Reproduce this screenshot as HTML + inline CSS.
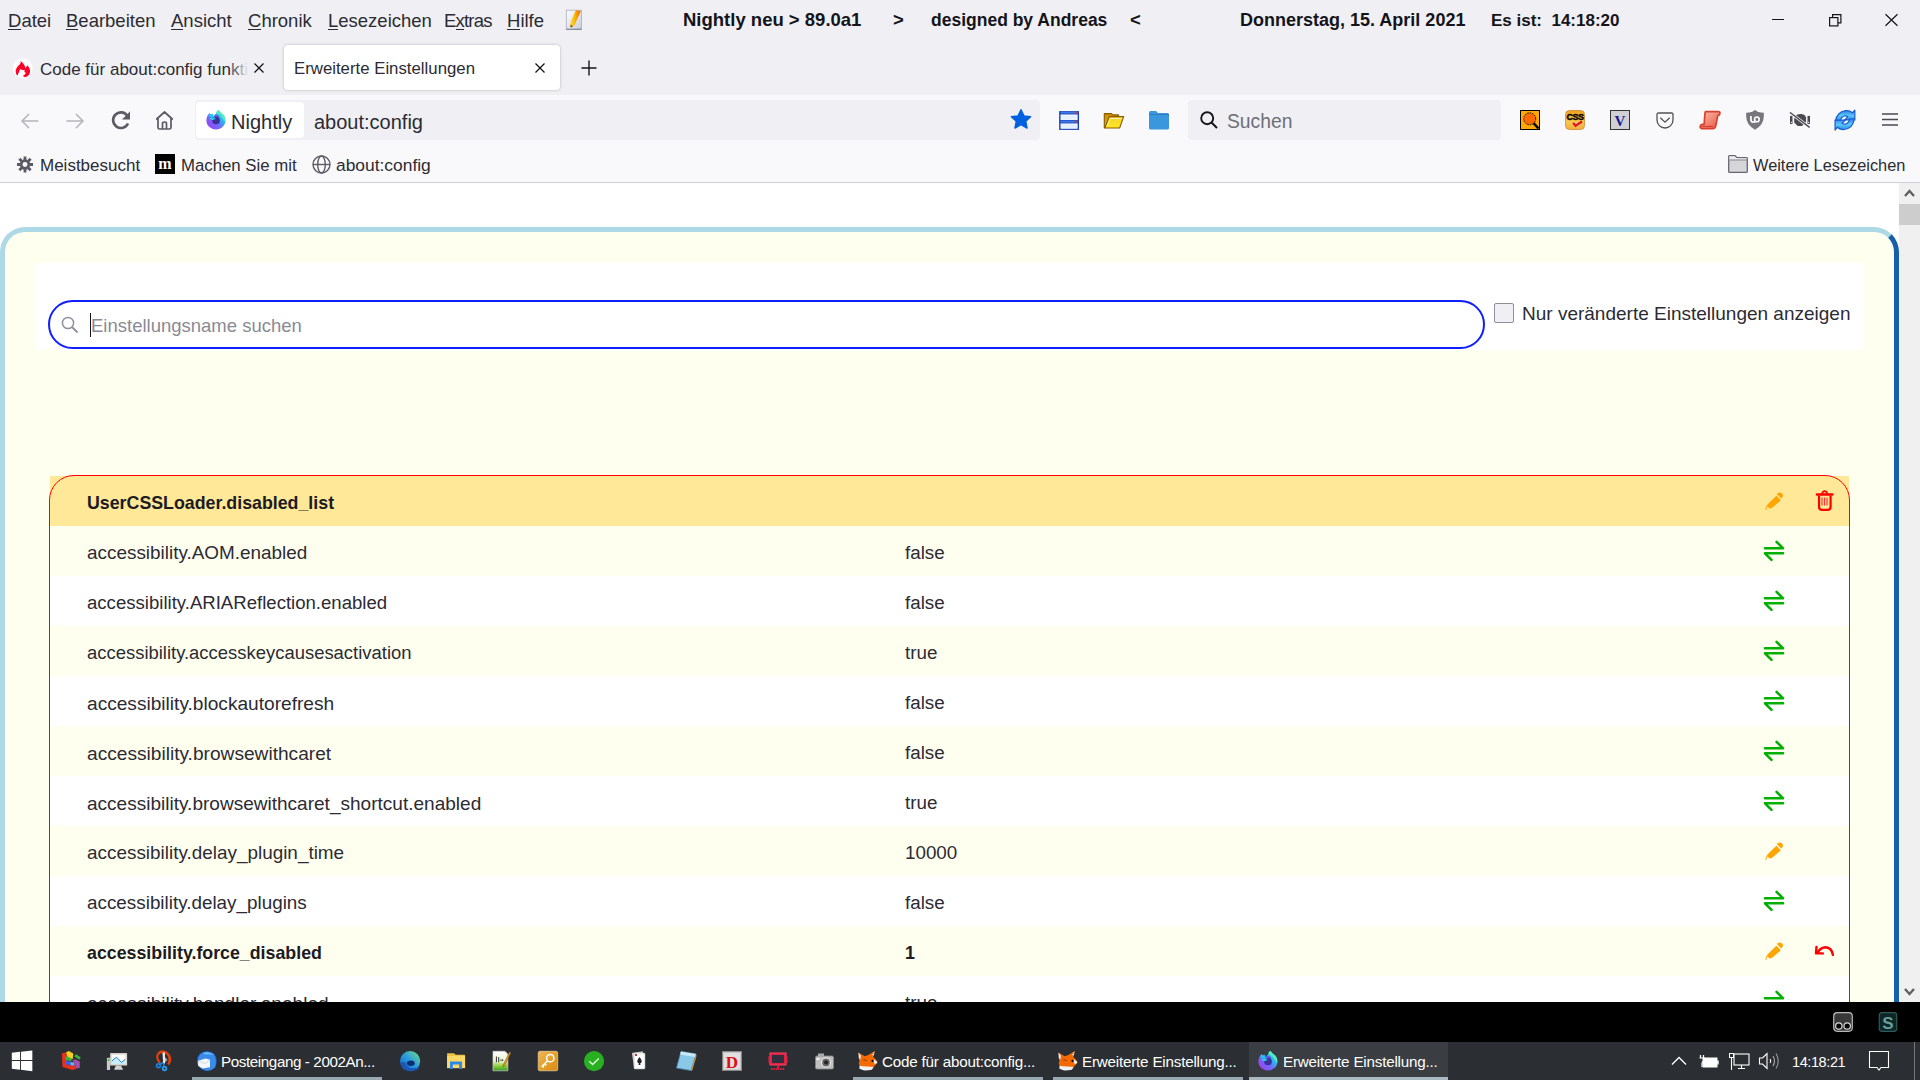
<!DOCTYPE html>
<html><head><meta charset="utf-8">
<style>
*{box-sizing:border-box;margin:0;padding:0}
html,body{width:1920px;height:1080px;overflow:hidden;background:#fff;font-family:"Liberation Sans",sans-serif;color:#15141a}
.a{position:absolute;white-space:pre;line-height:1}
svg.a{overflow:visible}
#menubar{position:absolute;left:0;top:0;width:1920px;height:95px;background:#f0f0f4}
#nav{position:absolute;left:0;top:95px;width:1920px;height:50px;background:#f9f9fb}
#bm{position:absolute;left:0;top:145px;width:1920px;height:38px;background:#f9f9fb;border-bottom:1px solid #cfcfd8}
#content{position:absolute;left:0;top:183px;width:1899px;height:819px;background:#fff;overflow:hidden}
#sb{position:absolute;left:1899px;top:183px;width:21px;height:819px;background:#f0f0f0}
#black{position:absolute;left:0;top:1002px;width:1920px;height:40px;background:#000}
#task{position:absolute;left:0;top:1042px;width:1920px;height:38px;background:#2b2f33}
.mu{font-size:18.5px;top:12px;color:#2c2b33}
.mu u{text-decoration:none;display:inline-block;border-bottom:1px solid #2c2b33;line-height:17px}
.tt{font-size:18.5px;font-weight:700;top:11px;color:#15141a}
.tab{position:absolute;top:45px;height:45px;border-radius:4px}
.tabtxt{font-size:16.5px;top:61px;color:#2c2b33}
.rn{font-size:18.8px;color:#2c2b33}
.rn.b{font-size:17.8px;font-weight:700;color:#1c1b22}
.bmt{font-size:17px;top:157px;color:#2c2b33}
</style></head><body>
<div id="menubar"></div>
<div class="a mu" style="left:8px"><u>D</u>atei</div>
<div class="a mu" style="left:66px"><u>B</u>earbeiten</div>
<div class="a mu" style="left:171px"><u>A</u>nsicht</div>
<div class="a mu" style="left:248px"><u>C</u>hronik</div>
<div class="a mu" style="left:328px"><u>L</u>esezeichen</div>
<div class="a mu" style="left:444px;letter-spacing:-0.8px">E<u>x</u>tras</div>
<div class="a mu" style="left:507px"><u>H</u>ilfe</div>
<!-- notepad icon -->
<svg class="a" style="left:550px;top:0px" width="50" height="40" viewBox="0 0 1350 1080">
 <defs><linearGradient id="npg" x1="0" y1="0" x2="1" y2="0"><stop offset="0" stop-color="#ffe040"/><stop offset="0.5" stop-color="#f8b000"/><stop offset="1" stop-color="#f06000"/></linearGradient>
 <linearGradient id="npp" x1="0" y1="0" x2="1" y2="1"><stop offset="0" stop-color="#ffffff"/><stop offset="1" stop-color="#c8ccd8"/></linearGradient></defs>
 <rect x="440" y="275" width="410" height="525" fill="url(#npp)" stroke="#a8aec0" stroke-width="22"/>
 <rect x="440" y="775" width="410" height="28" fill="#7a8090"/>
 <path d="M700 270 L830 300 L660 680 L570 745 L545 700 L560 590 Z" fill="url(#npg)"/>
 <path d="M545 700 L570 745 L620 715 L560 660 Z" fill="#8a4a2a"/>
</svg>

<div class="a tt" style="left:683px">Nightly neu &gt; 89.0a1</div>
<div class="a tt" style="left:893px">&gt;</div>
<div class="a tt" style="left:931px;font-size:17.5px;top:12px">designed by Andreas</div>
<div class="a tt" style="left:1130px">&lt;</div>
<div class="a tt" style="left:1240px;font-size:18px">Donnerstag, 15. April 2021</div>
<div class="a tt" style="left:1491px;font-size:17px;top:12px">Es ist:  14:18:20</div>

<!-- window controls -->
<svg class="a" style="left:1772px;top:19px" width="12" height="2"><rect width="12" height="1" fill="#15141a"/></svg>
<svg class="a" style="left:1829px;top:14px" width="13" height="13" viewBox="0 0 13 13"><rect x="0.6" y="3.6" width="8.3" height="8.3" fill="none" stroke="#15141a" stroke-width="1.2"/><path d="M3.6 3.6 V0.6 H11.9 V8.9 H8.9" fill="none" stroke="#15141a" stroke-width="1.2"/></svg>
<svg class="a" style="left:1885px;top:14px" width="13" height="12" viewBox="0 0 13 12"><path d="M0.5 0.3 L12.5 11.7 M12.5 0.3 L0.5 11.7" stroke="#15141a" stroke-width="1.2"/></svg>

<!-- tabs -->
<svg class="a" style="left:8px;top:52px" width="32" height="32" viewBox="0 0 1080 1080">
 <circle cx="495" cy="545" r="335" fill="#fff"/>
 <path d="M410 300 C500 350 580 440 585 545 C610 520 640 480 655 445 C720 520 760 600 740 690 C720 790 640 850 560 845 C530 840 505 815 510 800 C560 770 600 730 600 690 C560 690 540 660 565 595 C530 610 460 615 420 570 C390 610 350 720 320 805 C280 760 250 690 260 630 C270 540 340 460 400 410 C430 380 440 340 410 300 Z" fill="#ff0026"/>
</svg>
<div class="a tabtxt" style="left:40px;font-size:17px">Code für about:config fun<span style="color:#6a6a72">k</span><span style="color:#b0b0b8">t</span><span style="color:#dcdce2">i</span></div>
<svg class="a" style="left:254px;top:63px" width="10" height="10" viewBox="0 0 10 10"><path d="M0.5 0.5 L9.5 9.5 M9.5 0.5 L0.5 9.5" stroke="#15141a" stroke-width="1.3"/></svg>
<div class="tab" style="left:284px;width:276px;background:#fff;box-shadow:0 0 3px rgba(0,0,0,0.25)"></div>
<div class="a tabtxt" style="left:294px;font-size:16.8px">Erweiterte Einstellungen</div>
<svg class="a" style="left:535px;top:63px" width="10" height="10" viewBox="0 0 10 10"><path d="M0.5 0.5 L9.5 9.5 M9.5 0.5 L0.5 9.5" stroke="#15141a" stroke-width="1.3"/></svg>
<svg class="a" style="left:581px;top:60px" width="16" height="16" viewBox="0 0 16 16"><path d="M8 0.5 V15.5 M0.5 8 H15.5" stroke="#15141a" stroke-width="1.4"/></svg>

<div id="nav"></div>
<!-- back / forward -->
<svg class="a" style="left:21px;top:113px" width="18" height="16" viewBox="0 0 18 16"><path d="M17.5 8 H1.5 M8 1 L1 8 L8 15" fill="none" stroke="#b4b4ba" stroke-width="1.5"/></svg>
<svg class="a" style="left:66px;top:113px" width="18" height="16" viewBox="0 0 18 16"><path d="M0.5 8 H16.5 M10 1 L17 8 L10 15" fill="none" stroke="#b4b4ba" stroke-width="1.5"/></svg>
<!-- reload -->
<svg class="a" style="left:111px;top:111px" width="20" height="19" viewBox="0 0 20 19">
 <path d="M16.2 4.5 A7.8 7.8 0 1 0 17 12.5" fill="none" stroke="#5b5b66" stroke-width="2.6"/>
 <path d="M19 0.5 V8.5 H11 Z" fill="#5b5b66"/>
</svg>
<!-- home -->
<svg class="a" style="left:155px;top:111px" width="19" height="19" viewBox="0 0 19 19">
 <path d="M1.2 8.5 L9.5 1 L17.8 8.5 M3 7.5 V16.5 Q3 18 4.5 18 H14.5 Q16 18 16 16.5 V7.5 M7.5 18 V12.5 Q7.5 11 9.5 11 Q11.5 11 11.5 12.5 V18" fill="none" stroke="#5b5b66" stroke-width="1.7" stroke-linejoin="round"/>
</svg>
<!-- urlbar -->
<div class="a" style="left:195px;top:100px;width:845px;height:40px;background:#f0f0f4;border-radius:4px"></div>
<div class="a" style="left:196px;top:102px;width:108px;height:36px;background:#fff;border-radius:4px"></div>
<svg class="a" style="left:200px;top:104px" width="32" height="32" viewBox="0 0 1080 1080">
 <defs>
  <linearGradient id="ng" x1="0.1" y1="0.9" x2="0.9" y2="0.2"><stop offset="0" stop-color="#9c40f4"/><stop offset="0.45" stop-color="#6f6cf8"/><stop offset="0.75" stop-color="#2ab8f0"/><stop offset="1" stop-color="#50f0b8"/></linearGradient>
 </defs>
 <path d="M540 330 C560 260 600 220 625 200 C680 260 720 320 780 350 C840 420 860 500 860 560 C860 730 720 860 540 860 C360 860 215 720 215 560 C215 450 260 360 320 300 C340 330 350 350 360 360 C380 340 400 330 420 330 C430 370 440 400 460 410 C490 360 520 340 540 330 Z" fill="url(#ng)"/>
 <path d="M560 240 C600 210 620 200 625 200 C680 270 730 330 790 360 C850 440 860 520 850 600 C800 560 750 460 700 400 C650 350 600 330 560 330 Z" fill="#55f0c0" opacity="0.85"/>
 <circle cx="540" cy="555" r="130" fill="#3d2f9e"/>
 <path d="M470 400 C540 360 620 380 640 420 C600 430 580 440 560 450 Z" fill="#7a3ae0"/>
 <path d="M300 480 C380 470 470 470 540 495 C500 520 450 525 410 540 C380 510 340 500 300 480 Z" fill="#20e8e0"/>
 <path d="M320 300 C340 340 360 360 380 350 C400 335 420 330 425 335 C430 400 460 430 520 470 C440 460 350 440 290 420 C290 370 300 330 320 300 Z" fill="#14d0f8"/>
</svg>
<div class="a" style="left:231px;top:112px;font-size:20px;color:#2c2b33">Nightly</div>
<div class="a" style="left:314px;top:112px;font-size:20px;color:#2c2b33">about:config</div>
<!-- star -->
<svg class="a" style="left:1010px;top:109px" width="22" height="21" viewBox="0 0 22 21"><path d="M11 0.8 L13.9 6.9 L20.6 7.7 L15.7 12.3 L17 19 L11 15.7 L5 19 L6.3 12.3 L1.4 7.7 L8.1 6.9 Z" fill="#0060df" stroke="#0060df" stroke-width="1.5" stroke-linejoin="round"/></svg>
<!-- window icon -->
<svg class="a" style="left:990px;top:95px" width="210" height="50" viewBox="0 0 1920 457">
 <rect x="632" y="147" width="182" height="172" fill="#1a3fb8"/>
 <rect x="645" y="152" width="156" height="18" fill="#3a7ae8"/>
 <rect x="775" y="154" width="22" height="14" fill="#e03838"/>
 <rect x="645" y="178" width="156" height="50" fill="#ffffff"/>
 <rect x="650" y="186" width="146" height="38" fill="#e4f0ff"/>
 <rect x="645" y="234" width="156" height="18" fill="#3a7ae8"/>
 <rect x="775" y="236" width="22" height="14" fill="#e03838"/>
 <rect x="645" y="260" width="156" height="48" fill="#ffffff"/>
 <rect x="650" y="266" width="146" height="38" fill="#e4f0ff"/>
</svg>
<!-- open folder -->
<svg class="a" style="left:990px;top:95px" width="210" height="50" viewBox="0 0 1920 457">
 <defs><linearGradient id="fog" x1="0" y1="0" x2="0" y2="1"><stop offset="0" stop-color="#f8d030"/><stop offset="1" stop-color="#ffe820"/></linearGradient>
 <linearGradient id="fob" x1="0" y1="0" x2="0" y2="1"><stop offset="0" stop-color="#c89000"/><stop offset="1" stop-color="#e8b000"/></linearGradient></defs>
 <path d="M1045 170 H1110 L1125 182 H1175 V215 H1090 L1055 300 H1045 Z" fill="url(#fob)" stroke="#8a5a00" stroke-width="10" stroke-linejoin="round"/>
 <path d="M1090 198 H1222 L1185 302 H1050 Z" fill="url(#fog)" stroke="#8a5a00" stroke-width="10" stroke-linejoin="round"/>
 <path d="M1070 285 L1100 215 H1205" fill="none" stroke="#fff8c0" stroke-width="8"/>
</svg>
<!-- blue folder -->
<svg class="a" style="left:1149px;top:110px" width="20" height="20" viewBox="0 0 20 20">
 <path d="M0 2.5 Q0 1 1.5 1 H7 L9 3 H18.5 Q20 3 20 4.5 V18 Q20 19.5 18.5 19.5 H1.5 Q0 19.5 0 18 Z" fill="#3a96dd"/>
 <path d="M0 4.5 H20" stroke="#2f7fc0" stroke-width="1"/>
</svg>
<!-- search box -->
<div class="a" style="left:1188px;top:100px;width:313px;height:40px;background:#f0f0f4;border-radius:4px"></div>
<svg class="a" style="left:1200px;top:111px" width="18" height="18" viewBox="0 0 18 18"><circle cx="7.2" cy="7.2" r="6" fill="none" stroke="#15141a" stroke-width="1.9"/><path d="M11.5 11.5 L17 17" stroke="#15141a" stroke-width="2"/></svg>
<div class="a" style="left:1227px;top:112px;font-size:19.3px;color:#6e6e78">Suchen</div>

<!-- extension icons -->
<svg class="a" style="left:1520px;top:110px" width="20" height="20" viewBox="0 0 20 20">
 <rect x="0.5" y="0.5" width="19" height="19" fill="#ffa800" stroke="#000" stroke-width="1"/>
 <path d="M13.5 13 L18.5 18.5" stroke="#000" stroke-width="2.6"/>
 <circle cx="9.7" cy="8.8" r="6" fill="#ff6a00" stroke="#111" stroke-width="1" stroke-dasharray="1.6 0.9"/>
</svg>
<svg class="a" style="left:1565px;top:110px" width="20" height="20" viewBox="0 0 20 20">
 <defs><linearGradient id="cssg" x1="0" y1="0" x2="0" y2="1"><stop offset="0" stop-color="#f0a020"/><stop offset="0.6" stop-color="#f8c850"/><stop offset="1" stop-color="#f0b040"/></linearGradient></defs>
 <rect x="0.5" y="0.5" width="19" height="19" rx="4" fill="url(#cssg)" stroke="#d08a30" stroke-width="0.8"/>
 <text x="10" y="10" font-family="Liberation Sans" font-weight="700" font-size="9" text-anchor="middle" fill="#000" stroke="#000" stroke-width="0.4" letter-spacing="-0.5">CSS</text>
 <path d="M8.2 12.8 L10.5 15.8 L17 11.5" fill="none" stroke="#e0102a" stroke-width="2.2"/>
</svg>
<svg class="a" style="left:1610px;top:110px" width="20" height="20" viewBox="0 0 20 20">
 <rect x="0.5" y="0.5" width="19" height="19" fill="#d0d0d4" stroke="#333" stroke-width="1"/>
 <text x="10" y="15.5" font-family="Liberation Serif" font-weight="700" font-size="15" text-anchor="middle" fill="#1a1a90">V</text>
</svg>
<svg class="a" style="left:1656px;top:112px" width="18" height="17" viewBox="0 0 18 17">
 <path d="M1 2.5 Q1 1 2.5 1 H15.5 Q17 1 17 2.5 V8 A8 8 0 0 1 1 8 Z" fill="none" stroke="#505058" stroke-width="1.3"/>
 <path d="M4.3 5.8 L9 10.2 L13.7 5.8" fill="none" stroke="#505058" stroke-width="1.3"/>
</svg>
<svg class="a" style="left:1690px;top:95px" width="230" height="50" viewBox="0 0 1920 417">
 <defs><linearGradient id="scg" x1="0" y1="0" x2="1" y2="1"><stop offset="0" stop-color="#fbc0b0"/><stop offset="0.6" stop-color="#f0806c"/><stop offset="1" stop-color="#e0503e"/></linearGradient></defs>
 <path d="M128 138 H238 Q255 142 248 160 Q243 172 232 172 L214 262 Q210 278 195 280 H100 Q82 278 85 260 Q90 245 105 245 H118 L125 150 Q127 138 138 138 Z" fill="url(#scg)" stroke="#d8402e" stroke-width="14" stroke-linejoin="round"/>
 <path d="M95 262 H190" stroke="#d8402e" stroke-width="10"/>
</svg>
<svg class="a" style="left:1740px;top:105px" width="80" height="30" viewBox="0 0 1920 720">
 <path d="M360 118 L425 160 Q500 182 572 185 V265 Q572 480 360 592 Q148 480 148 265 V185 Q220 182 295 160 Z" fill="#76767c"/>
 <path d="M262 262 V340 Q262 412 325 412 Q370 412 385 380" fill="none" stroke="#fff" stroke-width="40"/>
 <circle cx="405" cy="345" r="56" fill="none" stroke="#fff" stroke-width="38"/>
</svg>
<svg class="a" style="left:1740px;top:105px" width="80" height="30" viewBox="0 0 1920 720">
 <rect x="1200" y="262" width="60" height="195" fill="#4a4a52"/>
 <rect x="1620" y="262" width="60" height="195" fill="#4a4a52"/>
 <circle cx="1232" cy="418" r="14" fill="#f9f9fb"/><circle cx="1648" cy="418" r="14" fill="#f9f9fb"/>
 <path d="M1300 330 L1345 245 Q1400 212 1480 215 Q1560 225 1585 300 V410 L1490 505 H1385 L1300 420 Z" fill="#4a4a52"/>
 <path d="M1205 182 L1668 535" stroke="#f9f9fb" stroke-width="70"/>
 <path d="M1210 185 L1662 530" stroke="#4a4a52" stroke-width="34" stroke-linecap="round"/>
</svg>
<svg class="a" style="left:1690px;top:95px" width="230" height="50" viewBox="0 0 1920 417">
 <defs><linearGradient id="syg" x1="0" y1="0" x2="0" y2="1"><stop offset="0" stop-color="#2a7de8"/><stop offset="0.5" stop-color="#5ac8f8"/><stop offset="1" stop-color="#2a8ae8"/></linearGradient></defs>
 <path d="M1215 218 Q1225 140 1300 130 Q1340 128 1355 150 L1376 126 V208 H1290 L1318 182 Q1305 172 1290 175 Q1262 182 1255 218 Z" fill="url(#syg)" stroke="#1a5cd0" stroke-width="10" stroke-linejoin="round"/>
 <path d="M1372 198 Q1362 278 1287 288 Q1247 290 1232 268 L1211 292 V210 H1297 L1269 236 Q1282 246 1297 243 Q1325 236 1332 198 Z" fill="url(#syg)" stroke="#1a5cd0" stroke-width="10" stroke-linejoin="round"/>
</svg>
<svg class="a" style="left:1882px;top:113px" width="16" height="13" viewBox="0 0 16 13"><path d="M0 1 H16 M0 6.5 H16 M0 12 H16" stroke="#4a4a52" stroke-width="1.4"/></svg>

<div id="bm"></div>
<!-- bookmarks -->
<svg class="a" style="left:16px;top:156px" width="18" height="17" viewBox="0 0 18 18">
 <g fill="#5b5b66"><circle cx="9" cy="9" r="5.5"/>
 <g stroke="#5b5b66" stroke-width="3"><path d="M9 0.5 V17.5 M0.5 9 H17.5 M3 3 L15 15 M15 3 L3 15"/></g></g>
 <circle cx="9" cy="9" r="2.6" fill="#f9f9fb"/>
</svg>
<div class="a bmt" style="left:40px">Meistbesucht</div>
<svg class="a" style="left:155px;top:154px" width="20" height="20" viewBox="0 0 20 20"><rect width="20" height="20" fill="#000"/><text x="10" y="15" font-family="Liberation Serif" font-weight="700" font-size="16" text-anchor="middle" fill="#fff">m</text></svg>
<div class="a bmt" style="left:181px;font-size:16.8px;top:157.5px">Machen Sie mit</div>
<svg class="a" style="left:312px;top:155px" width="19" height="19" viewBox="0 0 19 19"><g fill="none" stroke="#5b5b66" stroke-width="1.4"><circle cx="9.5" cy="9.5" r="8.5"/><ellipse cx="9.5" cy="9.5" rx="3.8" ry="8.5"/><path d="M1 9.5 H18"/></g></svg>
<div class="a bmt" style="left:336px;font-size:17.4px;top:156.5px">about:config</div>
<svg class="a" style="left:1728px;top:155px" width="20" height="18" viewBox="0 0 20 18"><path d="M0.7 1.5 Q0.7 0.7 1.5 0.7 H7 L9 2.7 H18.5 Q19.3 2.7 19.3 3.5 V16.5 Q19.3 17.3 18.5 17.3 H1.5 Q0.7 17.3 0.7 16.5 Z" fill="#d6d6da" stroke="#66666e" stroke-width="1.3"/><path d="M1.4 1.4 H6.8 L8.6 3.3 H18.6 V4.6 H1.4 Z" fill="#ececf0"/><path d="M0.7 5 H19.3" stroke="#88888e" stroke-width="1"/></svg>
<div class="a bmt" style="left:1753px;font-size:16.35px">Weitere Lesezeichen</div>

<div id="content"></div>
<!-- container -->
<div class="a" style="left:0;top:227px;width:1899px;height:900px;background:#fffff0;border-style:solid;border-width:5px 5px 0 5px;border-color:#add8e6 #155fab #add8e6 #add8e6;border-radius:25px 25px 0 0"></div>
<div class="a" style="left:36px;top:263px;width:1827px;height:87px;background:#fff"></div>
<div class="a" style="left:48px;top:300px;width:1437px;height:49px;border:2px solid #0f1fff;border-radius:25px;background:#fff"></div>
<svg class="a" style="left:61px;top:316px" width="18" height="18" viewBox="0 0 18 18"><circle cx="7" cy="7" r="5.6" fill="none" stroke="#8f8f9d" stroke-width="1.5"/><path d="M11 11 L16.5 16.5" stroke="#8f8f9d" stroke-width="1.8"/></svg>
<div class="a" style="left:90px;top:313px;width:1px;height:24px;background:#15141a"></div>
<div class="a" style="left:91px;top:317px;font-size:18.5px;color:#8a8a94">Einstellungsname suchen</div>
<div class="a" style="left:1494px;top:303px;width:20px;height:20px;border:1px solid #8f8f9d;border-radius:2px;background:#f0f0f4"></div>
<div class="a" style="left:1522px;top:304px;font-size:19px;color:#2c2b33">Nur veränderte Einstellungen anzeigen</div>
<!-- table -->
<div class="a" style="left:50px;top:476px;width:1799px;height:50px;background:#ffe898"></div>
<div class="a rn b" style="left:87px;top:495px">UserCSSLoader.disabled_list</div>
<svg class="a" style="left:1750px;top:485px" width="50" height="85" viewBox="0 0 635 1080"><path d="M335 138 L392 193 L282 290 Q240 305 192 316 Q203 268 228 242 Z" fill="#ffa500"/><path d="M348 108 Q378 80 407 107 Q432 134 405 162 L397 170 L340 115 Z" fill="#ffa500"/><path d="M222 272 L250 298 Q228 305 208 309 Q213 290 222 272 Z" fill="#ffe898"/></svg>
<svg class="a" style="left:1790px;top:460px" width="80" height="80" viewBox="0 0 1080 1080"><path d="M365 466 H572" stroke="#f00" stroke-width="34" stroke-linecap="round"/><path d="M432 458 Q440 420 468 420 Q496 420 504 458" fill="none" stroke="#f00" stroke-width="24"/><path d="M392 478 V632 Q392 672 432 672 H508 Q548 672 548 632 V478" fill="none" stroke="#f00" stroke-width="30"/><path d="M432 505 V615 M466 505 V615 M500 505 V615" stroke="#f33" stroke-width="16"/></svg>
<div class="a" style="left:50px;top:526px;width:1799px;height:50px;background:#fffff0"></div>
<div class="a rn" style="top:544px;left:87px;font-size:18.91px">accessibility.AOM.enabled</div>
<div class="a rn" style="top:544px;left:905px">false</div>
<svg class="a" style="left:1750px;top:485px" width="50" height="85" viewBox="0 0 635 1080"><path d="M190 805 H420 L337 722 M420 868 H190 L273 951" fill="none" stroke="#00b000" stroke-width="32" stroke-linecap="round" stroke-linejoin="round"/></svg>
<div class="a" style="left:50px;top:576px;width:1799px;height:50px;background:#fff"></div>
<div class="a rn" style="top:594px;left:87px;font-size:18.59px">accessibility.ARIAReflection.enabled</div>
<div class="a rn" style="top:594px;left:905px">false</div>
<svg class="a" style="left:1750px;top:535px" width="50" height="85" viewBox="0 0 635 1080"><path d="M190 805 H420 L337 722 M420 868 H190 L273 951" fill="none" stroke="#00b000" stroke-width="32" stroke-linecap="round" stroke-linejoin="round"/></svg>
<div class="a" style="left:50px;top:626px;width:1799px;height:50px;background:#fffff0"></div>
<div class="a rn" style="top:644px;left:87px;font-size:18.46px">accessibility.accesskeycausesactivation</div>
<div class="a rn" style="top:644px;left:905px">true</div>
<svg class="a" style="left:1750px;top:585px" width="50" height="85" viewBox="0 0 635 1080"><path d="M190 805 H420 L337 722 M420 868 H190 L273 951" fill="none" stroke="#00b000" stroke-width="32" stroke-linecap="round" stroke-linejoin="round"/></svg>
<div class="a" style="left:50px;top:676px;width:1799px;height:50px;background:#fff"></div>
<div class="a rn" style="top:694px;left:87px;font-size:19.12px">accessibility.blockautorefresh</div>
<div class="a rn" style="top:694px;left:905px">false</div>
<svg class="a" style="left:1750px;top:635px" width="50" height="85" viewBox="0 0 635 1080"><path d="M190 805 H420 L337 722 M420 868 H190 L273 951" fill="none" stroke="#00b000" stroke-width="32" stroke-linecap="round" stroke-linejoin="round"/></svg>
<div class="a" style="left:50px;top:726px;width:1799px;height:50px;background:#fffff0"></div>
<div class="a rn" style="top:744px;left:87px;font-size:19.14px">accessibility.browsewithcaret</div>
<div class="a rn" style="top:744px;left:905px">false</div>
<svg class="a" style="left:1750px;top:685px" width="50" height="85" viewBox="0 0 635 1080"><path d="M190 805 H420 L337 722 M420 868 H190 L273 951" fill="none" stroke="#00b000" stroke-width="32" stroke-linecap="round" stroke-linejoin="round"/></svg>
<div class="a" style="left:50px;top:776px;width:1799px;height:50px;background:#fff"></div>
<div class="a rn" style="top:794px;left:87px;font-size:19.04px">accessibility.browsewithcaret_shortcut.enabled</div>
<div class="a rn" style="top:794px;left:905px">true</div>
<svg class="a" style="left:1750px;top:735px" width="50" height="85" viewBox="0 0 635 1080"><path d="M190 805 H420 L337 722 M420 868 H190 L273 951" fill="none" stroke="#00b000" stroke-width="32" stroke-linecap="round" stroke-linejoin="round"/></svg>
<div class="a" style="left:50px;top:826px;width:1799px;height:50px;background:#fffff0"></div>
<div class="a rn" style="top:844px;left:87px;font-size:18.91px">accessibility.delay_plugin_time</div>
<div class="a rn" style="top:844px;left:905px">10000</div>
<svg class="a" style="left:1750px;top:835px" width="50" height="85" viewBox="0 0 635 1080"><path d="M335 138 L392 193 L282 290 Q240 305 192 316 Q203 268 228 242 Z" fill="#ffa500"/><path d="M348 108 Q378 80 407 107 Q432 134 405 162 L397 170 L340 115 Z" fill="#ffa500"/><path d="M222 272 L250 298 Q228 305 208 309 Q213 290 222 272 Z" fill="#fffff0"/></svg>
<div class="a" style="left:50px;top:876px;width:1799px;height:50px;background:#fff"></div>
<div class="a rn" style="top:894px;left:87px;font-size:18.88px">accessibility.delay_plugins</div>
<div class="a rn" style="top:894px;left:905px">false</div>
<svg class="a" style="left:1750px;top:835px" width="50" height="85" viewBox="0 0 635 1080"><path d="M190 805 H420 L337 722 M420 868 H190 L273 951" fill="none" stroke="#00b000" stroke-width="32" stroke-linecap="round" stroke-linejoin="round"/></svg>
<div class="a" style="left:50px;top:926px;width:1799px;height:50px;background:#fffff0"></div>
<div class="a rn b" style="top:945px;left:87px">accessibility.force_disabled</div>
<div class="a rn b" style="top:945px;left:905px">1</div>
<svg class="a" style="left:1750px;top:935px" width="50" height="85" viewBox="0 0 635 1080"><path d="M335 138 L392 193 L282 290 Q240 305 192 316 Q203 268 228 242 Z" fill="#ffa500"/><path d="M348 108 Q378 80 407 107 Q432 134 405 162 L397 170 L340 115 Z" fill="#ffa500"/><path d="M222 272 L250 298 Q228 305 208 309 Q213 290 222 272 Z" fill="#fffff0"/></svg>
<svg class="a" style="left:1800px;top:930px" width="50" height="45" viewBox="0 0 1200 1080"><path d="M396 405 L384 558 L548 562 M430 530 Q500 420 610 415 Q760 420 790 598" fill="none" stroke="#f00" stroke-width="58" stroke-linecap="round" stroke-linejoin="round"/></svg>
<div class="a" style="left:50px;top:976px;width:1799px;height:50px;background:#fff"></div>
<div class="a rn" style="top:994px;left:87px;font-size:19.10px">accessibility.handler.enabled</div>
<div class="a rn" style="top:994px;left:905px">true</div>
<svg class="a" style="left:1750px;top:935px" width="50" height="85" viewBox="0 0 635 1080"><path d="M190 805 H420 L337 722 M420 868 H190 L273 951" fill="none" stroke="#00b000" stroke-width="32" stroke-linecap="round" stroke-linejoin="round"/></svg>

<div class="a" style="left:49px;top:475px;width:1801px;height:700px;border:1px solid #ff0000;border-radius:25px 25px 0 0"></div>
<div id="sb"></div>
<svg class="a" style="left:1904px;top:189px" width="11" height="8" viewBox="0 0 11 8"><path d="M1 7 L5.5 2 L10 7" fill="none" stroke="#606060" stroke-width="2.4"/></svg>
<div class="a" style="left:1899px;top:204px;width:21px;height:21px;background:#cdcdcd"></div>
<svg class="a" style="left:1904px;top:988px" width="11" height="8" viewBox="0 0 11 8"><path d="M1 1 L5.5 6 L10 1" fill="none" stroke="#606060" stroke-width="2.4"/></svg>
<div id="black"></div>
<svg class="a" style="left:1833px;top:1012px" width="20" height="20" viewBox="0 0 20 20"><rect x="0.7" y="0.7" width="18.6" height="18.6" rx="3.5" fill="#383838" stroke="#b8b8b8" stroke-width="1.2"/><circle cx="5.8" cy="14" r="3.2" fill="#000" stroke="#d8d8d8" stroke-width="1.2"/><circle cx="14.2" cy="14" r="3.2" fill="#000" stroke="#d8d8d8" stroke-width="1.2"/></svg>
<svg class="a" style="left:1878px;top:1012px" width="20" height="20" viewBox="0 0 20 20"><rect x="1.3" y="0.7" width="17.4" height="18.6" rx="2.5" fill="#0e2626" stroke="#2f5a5a" stroke-width="1.2"/><text x="10" y="16.5" font-family="Liberation Sans" font-weight="700" font-size="17" text-anchor="middle" fill="#6a9e9e">S</text></svg>
<div id="task"></div>
<svg class="a" style="left:0px;top:1045px" width="90" height="33" viewBox="0 0 1920 704">
 <path d="M252 165 L427 145 V322 H252 Z M447 143 L690 118 V322 H447 Z M252 340 H427 V527 L252 507 Z M447 340 H690 V558 L447 530 Z" fill="#fff"/>
 <path d="M1320 178 L1420 160 L1432 420 L1612 442 L1622 512 L1545 532 L1332 468 Z" fill="#e8301c"/>
 <path d="M1410 152 L1470 130 L1562 182 L1552 302 L1440 272 Z" fill="#f5d020"/>
 <path d="M1388 258 L1430 240 L1532 292 L1522 352 L1398 322 Z" fill="#3cb040"/>
 <path d="M1580 242 L1622 196 L1722 262 L1692 312 Z" fill="#3cb040"/>
 <path d="M1388 332 L1512 362 L1582 372 L1582 442 L1390 412 Z" fill="#3a60f0"/>
 <path d="M1500 370 L1580 372 L1582 442 L1510 432 Z" fill="#60b8e8"/>
 <path d="M1542 332 L1602 302 L1702 352 L1702 492 L1622 502 L1612 442 L1582 432 L1582 372 Z" fill="#a050a8"/>
</svg>




<svg class="a" style="left:100px;top:1045px" width="120" height="33" viewBox="0 0 1920 528">
 <rect x="110" y="205" width="52" height="195" fill="#c8c8c8"/>
 <rect x="122" y="225" width="28" height="30" fill="#30c030"/>
 <rect x="162" y="128" width="272" height="200" rx="10" fill="#d8d4cc"/>
 <rect x="188" y="155" width="218" height="150" fill="#ffffff"/>
 <path d="M190 255 L265 195 L345 280 L400 230 V305 H190 Z" fill="#c8ecfc"/>
 <path d="M190 255 L265 195 L345 280 L400 230" fill="none" stroke="#1a80d0" stroke-width="16"/>
 <path d="M255 328 H335 L370 395 H225 Z" fill="#d0d0d0"/>
 <path d="M930 140 Q1010 70 1090 150 Q1150 230 1090 310" fill="none" stroke="#e04010" stroke-width="42"/>
 <path d="M930 140 Q890 200 960 290" fill="none" stroke="#e04010" stroke-width="34"/>
 <path d="M1000 120 L1040 120 L1040 300 L1010 300 Z" fill="#e8e8e8"/>
 <path d="M1040 190 L1080 240 L1040 280 Z" fill="#b0b0b0"/>
 <circle cx="935" cy="330" r="30" fill="none" stroke="#1a80e0" stroke-width="28"/>
 <circle cx="1032" cy="375" r="30" fill="none" stroke="#2aa0f0" stroke-width="28"/>
 <path d="M960 310 L1010 280 M1020 345 L1020 290" stroke="#1a80e0" stroke-width="26"/>
 <circle cx="1710" cy="255" r="160" fill="#1a5ac0"/>
 <path d="M1600 150 Q1700 70 1820 140 Q1880 240 1840 360 Q1780 420 1700 410 Q1600 380 1560 300 Q1560 200 1600 150 Z" fill="#3a8ae8"/>
 <path d="M1640 130 Q1740 90 1820 160 Q1760 140 1700 150 Z" fill="#6ac0f8"/>
 <path d="M1570 250 L1690 215 L1760 235 V355 L1640 375 L1570 330 Z" fill="#f4f6fa"/>
 <path d="M1575 255 L1680 300 L1755 240" fill="none" stroke="#c0c8d8" stroke-width="10"/>
</svg>
<svg class="a" style="left:395px;top:1045px" width="220" height="33" viewBox="0 0 1920 288">
 <defs>
  <linearGradient id="edg1" x1="0" y1="0" x2="1" y2="1"><stop offset="0" stop-color="#30a0e0"/><stop offset="1" stop-color="#1050a8"/></linearGradient>
  <linearGradient id="edg2" x1="0" y1="0" x2="1" y2="0.6"><stop offset="0" stop-color="#20a8e8"/><stop offset="0.6" stop-color="#40c8b0"/><stop offset="1" stop-color="#80e060"/></linearGradient>
  <linearGradient id="npgr" x1="0" y1="0" x2="0" y2="1"><stop offset="0" stop-color="#ffffff"/><stop offset="0.5" stop-color="#e8f4d0"/><stop offset="0.75" stop-color="#90d040"/><stop offset="1" stop-color="#30a020"/></linearGradient>
  <linearGradient id="keyg" x1="0" y1="0" x2="1" y2="1"><stop offset="0" stop-color="#f0b850"/><stop offset="1" stop-color="#d88a10"/></linearGradient>
 </defs>
 <defs><linearGradient id="edg3" x1="0" y1="1" x2="1" y2="0"><stop offset="0" stop-color="#1060c0"/><stop offset="0.5" stop-color="#2a9ae0"/><stop offset="1" stop-color="#70e080"/></linearGradient></defs>
 <circle cx="132" cy="140" r="88" fill="url(#edg3)"/>
 <path d="M46 150 Q60 222 135 228 Q195 228 218 188 Q175 210 135 200 Q95 185 92 150 Z" fill="#1a58b8"/>
 <ellipse cx="138" cy="160" rx="34" ry="24" fill="#0e2c70"/>
 <path d="M455 72 H515 L530 85 H610 V200 H455 Z" fill="#f0c040"/>
 <rect x="455" y="95" width="157" height="107" fill="#ffd868"/>
 <path d="M480 210 V145 H585 V210 H560 V170 H505 V210 Z" fill="#2a8ae8"/>
 <path d="M855 55 H960 L985 80 V225 H855 Z" fill="url(#npgr)" stroke="#d0d0d0" stroke-width="6"/>
 <path d="M885 100 V150 M905 105 V150 M925 125 V140 M940 125 V140" stroke="#222" stroke-width="8"/>
 <path d="M1000 60 L1010 68 L955 185 L940 190 L945 175 Z" fill="#f0a820" stroke="#805010" stroke-width="5"/>
 <rect x="1250" y="55" width="170" height="170" rx="14" fill="url(#keyg)" stroke="#f4d8a0" stroke-width="6"/>
 <circle cx="1355" cy="115" r="32" fill="none" stroke="#fff" stroke-width="13"/>
 <path d="M1330 140 L1285 185 L1300 195 M1305 165 L1320 178" fill="none" stroke="#fff" stroke-width="13"/>
 <circle cx="1737" cy="140" r="88" fill="#28b020"/>
 <path d="M1695 142 L1725 170 L1778 118" fill="none" stroke="#e0f8d8" stroke-width="14"/>
</svg>
<div class="a" style="left:221px;top:1054px;font-size:15.2px;color:#fff;letter-spacing:-0.4px">Posteingang - 2002An...</div>
<div class="a" style="left:192px;top:1077px;width:190px;height:3px;background:#9aa8b2"></div>





<svg class="a" style="left:631px;top:1051px" width="16" height="20" viewBox="0 0 16 20"><rect x="2" y="1" width="11" height="16" rx="1" fill="#ddd" transform="rotate(-8 7 9)"/><rect x="3" y="2" width="11" height="16" rx="1" fill="#fff" stroke="#aaa" stroke-width="0.6"/><path d="M8.5 6 Q5 10 7 12 Q8 12.5 8.5 11 Q9 12.5 10 12 Q12 10 8.5 6Z M8 11 L7.5 14 H9.5 L9 11Z" fill="#222"/><rect x="4" y="3" width="2" height="2" fill="#c33"/></svg>
<svg class="a" style="left:676px;top:1051px" width="21" height="20" viewBox="0 0 21 20"><path d="M5 0.5 L20 3 L15 19.5 L0.5 17 Z" fill="#8ac8e8" stroke="#4a8ab0" stroke-width="0.8"/><path d="M5 0.5 L20 3 L19 6 L4 3.5Z" fill="#c8e8f8"/><path d="M15 19.5 L20 3 L20.5 5 L16 20Z" fill="#e0a030"/></svg>
<svg class="a" style="left:722px;top:1051px" width="20" height="20" viewBox="0 0 20 20"><rect x="0.5" y="0.5" width="19" height="19" fill="#c8c8c8" stroke="#888" stroke-width="1"/><rect x="2" y="2" width="16" height="16" fill="#e0e0e0"/><text x="10" y="16.5" font-family="Liberation Serif" font-weight="700" font-size="17" text-anchor="middle" fill="#e01010">D</text></svg>
<svg class="a" style="left:768px;top:1051px" width="20" height="20" viewBox="0 0 20 20"><rect x="2" y="2" width="16" height="12" fill="#e02040" stroke="#ff4060" stroke-width="1"/><rect x="4" y="4" width="12" height="8" fill="#303040"/><rect x="0.5" y="5" width="2" height="7" fill="#e02040"/><rect x="17.5" y="5" width="2" height="7" fill="#e02040"/><path d="M3 18 H17" stroke="#e02040" stroke-width="2" stroke-dasharray="1.5 0.8"/><rect x="9" y="14" width="2" height="3" fill="#e02040"/></svg>
<svg class="a" style="left:815px;top:1052px" width="19" height="18" viewBox="0 0 19 18"><rect x="0.5" y="4" width="18" height="13" rx="1.5" fill="#c0c0c0" stroke="#888" stroke-width="0.8"/><rect x="3" y="1.5" width="6" height="3" fill="#aaa"/><circle cx="11" cy="10.5" r="4.5" fill="#666" stroke="#eee" stroke-width="1.2"/><circle cx="11" cy="10.5" r="2" fill="#222"/><rect x="1.5" y="6" width="3" height="2" fill="#eee"/></svg>
<svg class="a" style="left:850px;top:1045px" width="40" height="33" viewBox="0 0 1309 1080">
 <path d="M275 245 L480 370 L600 330 L805 195 L760 390 L860 490 L900 570 L830 650 L780 730 L560 790 L330 770 L290 600 L320 460 Z" fill="#f56a00"/>
 <path d="M275 245 L360 350 L330 500 L285 420 Z" fill="#e8e8e8"/>
 <path d="M805 195 L740 300 L750 380 L790 290 Z" fill="#f0f0f0"/>
 <path d="M780 470 L900 560 L840 640 L790 600 Z" fill="#ececec"/>
 <path d="M320 680 Q450 700 560 700 Q700 705 770 720 L720 810 Q560 840 430 830 L300 770 Z" fill="#f0f0f0"/>
 <circle cx="735" cy="520" r="34" fill="#000"/>
 <path d="M430 490 Q490 480 550 510" fill="none" stroke="#7a3800" stroke-width="30"/>
</svg>
<div class="a" style="left:882px;top:1054px;font-size:15.2px;color:#fff;letter-spacing:-0.2px">Code für about:config...</div>
<div class="a" style="left:853px;top:1077px;width:190px;height:3px;background:#9aa8b2"></div>
<svg class="a" style="left:1050px;top:1045px" width="40" height="33" viewBox="0 0 1309 1080">
 <path d="M275 245 L480 370 L600 330 L805 195 L760 390 L860 490 L900 570 L830 650 L780 730 L560 790 L330 770 L290 600 L320 460 Z" fill="#f56a00"/>
 <path d="M275 245 L360 350 L330 500 L285 420 Z" fill="#e8e8e8"/>
 <path d="M805 195 L740 300 L750 380 L790 290 Z" fill="#f0f0f0"/>
 <path d="M780 470 L900 560 L840 640 L790 600 Z" fill="#ececec"/>
 <path d="M320 680 Q450 700 560 700 Q700 705 770 720 L720 810 Q560 840 430 830 L300 770 Z" fill="#f0f0f0"/>
 <circle cx="735" cy="520" r="34" fill="#000"/>
 <path d="M430 490 Q490 480 550 510" fill="none" stroke="#7a3800" stroke-width="30"/>
</svg>
<div class="a" style="left:1082px;top:1054px;font-size:15.2px;color:#fff;letter-spacing:-0.2px">Erweiterte Einstellung...</div>
<div class="a" style="left:1053px;top:1077px;width:190px;height:3px;background:#9aa8b2"></div>
<div class="a" style="left:1249px;top:1042px;width:199px;height:38px;background:#3a3e43"></div>
<svg class="a" style="left:1252px;top:1045px" width="32" height="32" viewBox="0 0 1080 1080">
 <defs>
  <linearGradient id="ng3" x1="0.1" y1="0.9" x2="0.9" y2="0.2"><stop offset="0" stop-color="#9c40f4"/><stop offset="0.45" stop-color="#6f6cf8"/><stop offset="0.75" stop-color="#2ab8f0"/><stop offset="1" stop-color="#50f0b8"/></linearGradient>
 </defs>
 <path d="M540 330 C560 260 600 220 625 200 C680 260 720 320 780 350 C840 420 860 500 860 560 C860 730 720 860 540 860 C360 860 215 720 215 560 C215 450 260 360 320 300 C340 330 350 350 360 360 C380 340 400 330 420 330 C430 370 440 400 460 410 C490 360 520 340 540 330 Z" fill="url(#ng3)"/>
 <path d="M560 240 C600 210 620 200 625 200 C680 270 730 330 790 360 C850 440 860 520 850 600 C800 560 750 460 700 400 C650 350 600 330 560 330 Z" fill="#55f0c0" opacity="0.85"/>
 <circle cx="540" cy="555" r="130" fill="#3d2f9e"/>
 <path d="M470 400 C540 360 620 380 640 420 C600 430 580 440 560 450 Z" fill="#7a3ae0"/>
 <path d="M300 480 C380 470 470 470 540 495 C500 520 450 525 410 540 C380 510 340 500 300 480 Z" fill="#20e8e0"/>
 <path d="M320 300 C340 340 360 360 380 350 C400 335 420 330 425 335 C430 400 460 430 520 470 C440 460 350 440 290 420 C290 370 300 330 320 300 Z" fill="#14d0f8"/>
</svg>
<div class="a" style="left:1283px;top:1054px;font-size:15.2px;color:#fff;letter-spacing:-0.2px">Erweiterte Einstellung...</div>
<div class="a" style="left:1249px;top:1077px;width:199px;height:3px;background:#aab8c2"></div>
<svg class="a" style="left:1671px;top:1056px" width="16" height="10" viewBox="0 0 16 10"><path d="M1 8.5 L8 1.5 L15 8.5" fill="none" stroke="#fff" stroke-width="1.3"/></svg>
<svg class="a" style="left:1699px;top:1054px" width="20" height="14" viewBox="0 0 20 14"><path d="M1.5 1 V4 M4.5 1 V4 M0.5 4 H5.5 V6.5 Q3 8 3 9 V13" fill="none" stroke="#fff" stroke-width="1.2"/><rect x="4" y="4" width="14" height="9" fill="#fff" stroke="#fff" stroke-width="1"/><rect x="18.2" y="6.5" width="1.5" height="4" fill="#fff"/></svg>
<svg class="a" style="left:1729px;top:1053px" width="21" height="17" viewBox="0 0 21 17"><rect x="5" y="1" width="15" height="11" fill="none" stroke="#fff" stroke-width="1.1"/><path d="M12.5 12 V15 M9 15.5 H16" stroke="#fff" stroke-width="1.1"/><rect x="0.5" y="0.5" width="4" height="4" fill="none" stroke="#fff" stroke-width="1"/><path d="M2.5 4.5 V17" stroke="#fff" stroke-width="1.1"/></svg>
<svg class="a" style="left:1759px;top:1052px" width="21" height="18" viewBox="0 0 21 18"><path d="M0.5 6 H3.5 L8 1.5 V16.5 L3.5 12 H0.5 Z" fill="none" stroke="#fff" stroke-width="1.1"/><path d="M11 7 Q12.5 9 11 11" fill="none" stroke="#fff" stroke-width="1.1"/><path d="M14 4 Q17 9 14 14" fill="none" stroke="#aaa" stroke-width="1.1"/><path d="M17 1.5 Q21.5 9 17 16.5" fill="none" stroke="#999" stroke-width="1.1"/></svg>
<div class="a" style="left:1792px;top:1055px;font-size:14.5px;color:#fff;letter-spacing:-0.4px">14:18:21</div>
<svg class="a" style="left:1869px;top:1051px" width="20" height="20" viewBox="0 0 20 20"><path d="M0.5 0.5 H19.5 V16.5 H12 L10 19 L8 16.5 H0.5 Z" fill="none" stroke="#fff" stroke-width="1.1"/></svg>
<div class="a" style="left:1914px;top:1042px;width:1px;height:38px;background:#777"></div>
</body></html>
